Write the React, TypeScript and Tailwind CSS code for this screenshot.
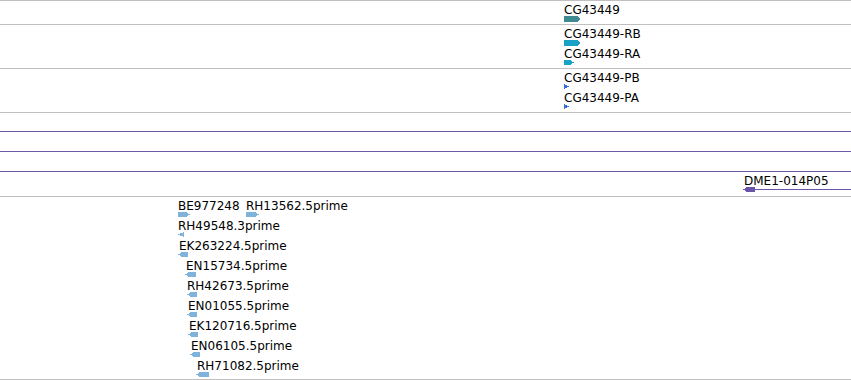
import React from "react";

type Glyph = {
  x: number;
  w: number;
  h?: number;
  dir: "r" | "l";
  color: string;
  shape?: "arrow" | "tri";
  line?: number; // thin line running on to this x
};

type Row = { label: string; lx: number; glyphs: Glyph[]; extra?: { label: string; lx: number } };

type Track = { cls: string; rows: Row[] };

const TEAL = "#3e8c91";
const CYAN = "#1aa2c6";
const BLUE = "#3a6ed8";
const PURPLE = "#6b55a8";
const EST = "#80b3dc";

const TRACKS: Track[] = [
  {
    cls: "h-[24px] border-[#c0c0c0]",
    rows: [{ label: "CG43449", lx: 564, glyphs: [{ x: 564, w: 17, h: 6, dir: "r", color: TEAL }] }],
  },
  {
    cls: "h-[44px] border-[#c0c0c0]",
    rows: [
      { label: "CG43449-RB", lx: 564, glyphs: [{ x: 564, w: 17, h: 6, dir: "r", color: CYAN }] },
      { label: "CG43449-RA", lx: 564, glyphs: [{ x: 564, w: 10, h: 5, dir: "r", color: CYAN }] },
    ],
  },
  {
    cls: "h-[44px] border-[#c0c0c0]",
    rows: [
      { label: "CG43449-PB", lx: 564, glyphs: [{ x: 564, w: 5, h: 5, dir: "r", color: BLUE, shape: "tri" }] },
      { label: "CG43449-PA", lx: 564, glyphs: [{ x: 564, w: 5, h: 5, dir: "r", color: BLUE, shape: "tri" }] },
    ],
  },
  { cls: "h-[19px] border-[#6e5aa8]", rows: [] },
  { cls: "h-[20px] border-[#6e5aa8]", rows: [] },
  { cls: "h-[20px] border-[#6e5aa8]", rows: [] },
  {
    cls: "h-[25px] border-[#c0c0c0]",
    rows: [
      {
        label: "DME1-014P05",
        lx: 744,
        glyphs: [{ x: 743, w: 12, h: 5, dir: "l", color: PURPLE, line: 851 }],
      },
    ],
  },
  {
    cls: "h-[183px] border-[#c0c0c0]",
    rows: [
      {
        label: "BE977248",
        lx: 178,
        extra: { label: "RH13562.5prime", lx: 246 },
        glyphs: [
          { x: 178, w: 12, h: 5, dir: "r", color: EST },
          { x: 246, w: 13, h: 5, dir: "r", color: EST },
        ],
      },
      { label: "RH49548.3prime", lx: 178, glyphs: [{ x: 178, w: 6, h: 5, dir: "l", color: EST, shape: "tri" }] },
      { label: "EK263224.5prime", lx: 179, glyphs: [{ x: 178, w: 10, h: 5, dir: "l", color: EST }] },
      { label: "EN15734.5prime", lx: 186, glyphs: [{ x: 185, w: 11, h: 5, dir: "l", color: EST }] },
      { label: "RH42673.5prime", lx: 187, glyphs: [{ x: 187, w: 10, h: 5, dir: "l", color: EST }] },
      { label: "EN01055.5prime", lx: 188, glyphs: [{ x: 187, w: 10, h: 5, dir: "l", color: EST }] },
      { label: "EK120716.5prime", lx: 189, glyphs: [{ x: 188, w: 10, h: 5, dir: "l", color: EST }] },
      { label: "EN06105.5prime", lx: 191, glyphs: [{ x: 190, w: 10, h: 5, dir: "l", color: EST }] },
      { label: "RH71082.5prime", lx: 197, glyphs: [{ x: 196, w: 13, h: 5, dir: "l", color: EST }] },
    ],
  },
];

function points(g: Glyph) {
  const h = g.h ?? 5;
  const w = g.w;
  const m = h / 2;
  if (g.shape === "tri") {
    return g.dir === "r" ? `0,0 ${w},${m} 0,${h}` : `${w},0 0,${m} ${w},${h}`;
  }
  const head = Math.min(4, w - 1);
  return g.dir === "r"
    ? `0,0 ${w - head},0 ${w},${m} ${w - head},${h} 0,${h}`
    : `${w},0 ${head},0 0,${m} ${head},${h} ${w},${h}`;
}

function GlyphShape({ g }: { g: Glyph }) {
  const h = g.h ?? 5;
  const total = g.line ? g.line - g.x : g.w;
  return (
    <svg
      className="absolute top-[15px]"
      style={{ left: g.x }}
      width={total}
      height={h}
      viewBox={`0 0 ${total} ${h}`}
      shapeRendering="crispEdges"
    >
      {g.line && <rect x={g.w} y={Math.floor(h / 2)} width={total - g.w} height={1} fill={g.color} />}
      <polygon points={points(g)} fill={g.color} />
    </svg>
  );
}

function Label({ text, x }: { text: string; x: number }) {
  return (
    <span className="absolute top-[2px] whitespace-nowrap text-[12px] leading-[14px] text-black" style={{ left: x }}>
      {text}
    </span>
  );
}

export default function App() {
  return (
    <div className="flex h-[380px] w-[851px] flex-col overflow-hidden border-t border-[#c0c0c0] bg-white font-['DejaVu_Sans',sans-serif]">
      {TRACKS.map((t, i) => (
        <div key={i} className={`relative shrink-0 border-b ${t.cls}`}>
          <div className="flex flex-col">
            {t.rows.map((r, j) => (
              <div key={j} className="relative h-5">
                <Label text={r.label} x={r.lx} />
                {r.extra && <Label text={r.extra.label} x={r.extra.lx} />}
                {r.glyphs.map((g, k) => (
                  <GlyphShape key={k} g={g} />
                ))}
              </div>
            ))}
          </div>
        </div>
      ))}
    </div>
  );
}
